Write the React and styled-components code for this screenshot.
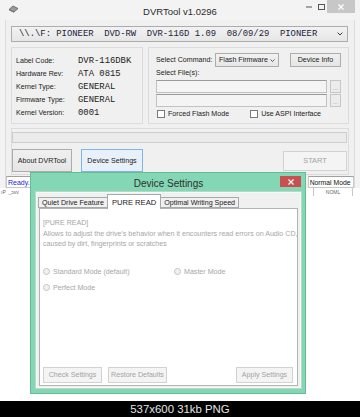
import React from 'react';
import styled, { createGlobalStyle } from 'styled-components';

const GlobalStyle = createGlobalStyle`
  html, body { margin: 0; padding: 0; background: #fff; }
  body { font-family: "Liberation Sans", Arial, sans-serif; font-size: 7.1px; color: #1a1a1a; }
  * { box-sizing: border-box; }
`;

const Screen = styled.div`
  width: 360px;
  height: 417px;
  display: flex;
  flex-direction: column;
  overflow: hidden;
`;

const Desktop = styled.div`
  position: relative;
  height: 401px;
  background: #fff;
`;

const Caption = styled.div`
  height: 16px;
  background: #000;
  color: #e4e4e4;
  font-size: 11.4px;
  display: flex;
  align-items: center;
  justify-content: center;
`;

/* ---------- main window ---------- */

const Window = styled.div`
  width: 360px;
  background: #f3f3f3;
  padding: 0 5px;
`;

const TitleBar = styled.div`
  height: 20px;
  display: grid;
  grid-template-columns: 1fr auto 1fr;
  align-items: center;
`;

const TitleText = styled.div`
  font-size: 9.5px;
  color: #2b2b2b;
  padding-top: 2px;
`;

const WinControls = styled.div`
  justify-self: end;
  align-self: start;
  display: flex;
  align-items: flex-start;
`;

const CtrlBtn = styled.div`
  width: ${p => p.$w}px;
  height: 13px;
  display: flex;
  align-items: center;
  justify-content: center;
  background: ${p => p.$bg || 'transparent'};
`;

const Client = styled.div`
  background: #f0f0f0;
  border-left: 1px solid #dcdcdc;
  border-right: 1px solid #dcdcdc;
`;

const ClientBody = styled.div`
  padding: 6px 5px 0 5px;
  display: flex;
  flex-direction: column;
`;

const DriveCombo = styled.div`
  height: 16px;
  margin-right: 1px;
  border: 1px solid #acacac;
  background: linear-gradient(#f2f2f2, #e6e6e6);
  display: flex;
  align-items: center;
  padding: 0 4px 0 7px;
  font-family: "Liberation Mono", "Courier New", monospace;
  font-size: 8.9px;
  color: #1c1c3a;
  white-space: pre;
`;

const Chevron = styled.span`
  margin-left: auto;
  display: flex;
`;

const GroupRow = styled.div`
  display: flex;
  gap: 5px;
  margin-top: 5px;
  height: 77px;
`;

const Group = styled.div`
  border: 1px solid #dcdcdc;
  width: ${p => (p.$w ? `${p.$w}px` : 'auto')};
  flex: ${p => (p.$w ? 'none' : '1')};
  margin-top: ${p => p.$mt || 0}px;
  padding: ${p => p.$pad};
  display: flex;
  flex-direction: column;
`;

const InfoRow = styled.div`
  height: 13.2px;
  display: flex;
  align-items: center;
`;

const InfoLabel = styled.span`
  width: 62px;
`;

const InfoValue = styled.span`
  font-family: "Liberation Mono", "Courier New", monospace;
  font-size: 8.9px;
  color: #222;
`;

const CmdRow = styled.div`
  display: flex;
  align-items: center;
  height: ${p => p.$h}px;
  margin-top: ${p => p.$mt || 0}px;
  white-space: nowrap;
`;

const SmallCombo = styled.div`
  width: 64px;
  height: 14px;
  margin-left: auto;
  border: 1px solid #acacac;
  background: linear-gradient(#f2f2f2, #e6e6e6);
  display: flex;
  align-items: center;
  padding: 0 3px;
`;

const Button = styled.div`
  width: ${p => p.$w}px;
  height: ${p => p.$h}px;
  display: flex;
  align-items: center;
  justify-content: center;
  border: 1px solid ${p => (p.$focus ? '#7eb4ea' : p.$disabled ? '#d2d2d2' : '#acacac')};
  background: ${p => (p.$focus ? '#e8f1fa' : p.$disabled ? '#f4f4f4' : 'linear-gradient(#f0f0f0, #e5e5e5)')};
  color: ${p => (p.$disabled ? '#a3a3a3' : '#1a1a1a')};
  font-size: ${p => p.$fs || 7.1}px;
  white-space: nowrap;
`;

const FileInput = styled.div`
  flex: 1;
  height: 13px;
  border: 1px solid #c2c2c2;
  border-top-color: #9a9a9a;
  background: #f4f4f4;
`;

const DotsBtn = styled.div`
  width: 11px;
  height: 13px;
  margin-left: 3px;
  border: 1px solid #c6c6c6;
  background: #ececec;
  color: #8a8a8a;
  font-size: 6px;
  display: flex;
  align-items: flex-end;
  justify-content: center;
  line-height: 7px;
`;

const Check = styled.span`
  width: 8px;
  height: 8px;
  border: 1px solid #7a7a7a;
  background: #fff;
  margin: 0 3px 0 ${p => p.$ml || 0}px;
`;

const Progress = styled.div`
  height: 11px;
  border: 1px solid #cdcdcd;
  background: #ebebeb;
`;

const ButtonRow = styled.div`
  margin-top: 6px;
  height: 23px;
  display: flex;
  align-items: center;
  gap: 9px;
`;

const StatusBar = styled.div`
  margin-top: 1px;
  height: 12px;
  display: flex;
  align-items: stretch;
`;

const StatusCell = styled.div`
  width: ${p => p.$w}px;
  margin-left: ${p => p.$ml || 0}px;
  border: 1px solid #c8c8c8;
  border-top-color: #a0a0a0;
  background: #fff;
  color: ${p => p.$color};
  display: flex;
  align-items: center;
  padding-left: 1px;
  font-size: ${p => p.$fs}px;
  white-space: nowrap;
`;

const GhostRow = styled.div`
  height: 8px;
  display: flex;
  align-items: center;
  color: #666;
  font-size: 5px;
`;

const GhostText = styled.span`
  margin-left: ${p => p.$ml}px;
  line-height: 6px;
`;

const GhostBox = styled.div`
  margin-left: auto;
  margin-right: 7px;
  width: 40px;
  height: 8px;
  border-left: 1px solid #c8c8c8;
  border-right: 1px solid #c8c8c8;
  display: flex;
  align-items: center;
  justify-content: center;
`;

/* ---------- device settings dialog ---------- */

const Dialog = styled.div`
  position: absolute;
  left: 30px;
  top: 172px;
  width: 276px;
  height: 222px;
  background: #83d7b4;
  border: 1px solid #62bd95;
  display: flex;
  flex-direction: column;
  padding: 0 4px 5px 5px;
`;

const DialogTitle = styled.div`
  height: 19px;
  display: grid;
  grid-template-columns: 1fr auto 1fr;
  align-items: center;
`;

const DialogTitleText = styled.div`
  grid-column: 2;
  font-size: 10px;
  color: #2f2f2f;
  padding-top: 2px;
`;

const CloseRed = styled.div`
  justify-self: end;
  align-self: start;
  margin-top: 3px;
  width: 21px;
  height: 11px;
  background: #c75050;
  display: flex;
  align-items: center;
  justify-content: center;
`;

const DialogBody = styled.div`
  flex: 1;
  background: #f0f0f0;
  border: 1px solid #f8f8f8;
  outline: 1px solid #b8d8c8;
  padding: 1px;
  display: flex;
  flex-direction: column;
`;

const Tabs = styled.div`
  display: flex;
  align-items: flex-end;
  height: 14px;
  position: relative;
  z-index: 1;
`;

const Tab = styled.div`
  height: ${p => (p.$active ? 15 : 11)}px;
  margin-bottom: ${p => (p.$active ? -1 : 0)}px;
  padding: 0 ${p => (p.$active ? 4 : 3)}px;
  background: ${p => (p.$active ? '#fff' : '#f0f0f0')};
  border: 1px solid #a9a9a9;
  border-bottom: ${p => (p.$active ? 'none' : '1px solid #a9a9a9')};
  margin-left: ${p => (p.$active ? -1 : 0)}px;
  margin-right: ${p => (p.$active ? -1 : 0)}px;
  display: flex;
  align-items: center;
  white-space: nowrap;
  font-size: ${p => (p.$active ? 7.6 : 7.1)}px;
  color: #1a1a1a;
`;

const TabPanel = styled.div`
  flex: 1;
  margin: 0 1px;
  background: #fff;
  border: 1px solid #b4b4b4;
  padding: 9px 4px 2px 3px;
  display: flex;
  flex-direction: column;
  color: #a6a6a6;
`;

const Para = styled.div`
  line-height: 10.5px;
  white-space: nowrap;
`;

const RadioRow = styled.div`
  display: flex;
  align-items: center;
  height: 10px;
  margin-top: ${p => p.$mt}px;
`;

const Radio = styled.span`
  width: 7px;
  height: 7px;
  border-radius: 50%;
  border: 1px solid #c3c3c3;
  background: #f1f1f1;
  margin-right: 3px;
`;

const RadioLabel = styled.span`
  width: ${p => (p.$w ? `${p.$w}px` : 'auto')};
`;

const DialogButtons = styled.div`
  margin-top: auto;
  display: flex;
  gap: 6px;
`;

const Drive = () => (
  <svg width="11" height="8" viewBox="0 0 11 8">
    <path d="M1 4.5 L5 1 L10 3.5 L6 7 Z" fill="#9a9a9a" stroke="#5a5a5a" strokeWidth="0.8" />
    <path d="M1 4.5 L6 7 L6 7.8 L1 5.3 Z" fill="#6d6d6d" />
  </svg>
);

const ChevronDown = ({ size = 6 }) => (
  <svg width={size} height={size * 0.6} viewBox="0 0 10 6">
    <path d="M1 1 L5 5 L9 1" fill="none" stroke="#333" strokeWidth="1.6" />
  </svg>
);

const Cross = ({ color }) => (
  <svg width="6" height="6" viewBox="0 0 6 6">
    <path d="M0.5 0.5 L5.5 5.5 M5.5 0.5 L0.5 5.5" stroke={color} strokeWidth="1.2" />
  </svg>
);

const info = [
  ['Label Code:', 'DVR-116DBK'],
  ['Hardware Rev:', 'ATA 0815'],
  ['Kernel Type:', 'GENERAL'],
  ['Firmware Type:', 'GENERAL'],
  ['Kernel Version:', '0001'],
];

export default function App() {
  return (
    <>
      <GlobalStyle />
      <Screen>
        <Desktop>
          <Window>
            <TitleBar>
              <div style={{ marginLeft: 3 }}><Drive /></div>
              <TitleText>DVRTool v1.0296</TitleText>
              <WinControls>
                <CtrlBtn $w={12}>
                  <svg width="6" height="2"><rect width="6" height="1" y="0.5" fill="#555" /></svg>
                </CtrlBtn>
                <CtrlBtn $w={12}>
                  <svg width="7" height="6"><rect x="0.5" y="0.5" width="6" height="5" fill="none" stroke="#555" /></svg>
                </CtrlBtn>
                <CtrlBtn $w={28} $bg="#c7c7c7"><Cross color="#fff" /></CtrlBtn>
              </WinControls>
            </TitleBar>
            <Client>
              <ClientBody>
                <DriveCombo>
                  {'\\\\.\\F: PIONEER  DVD-RW  DVR-116D 1.09  08/09/29  PIONEER'}
                  <Chevron><ChevronDown /></Chevron>
                </DriveCombo>
                <GroupRow>
                  <Group $w={132} $pad="6px 4px 0 4px">
                    {info.map(([l, v]) => (
                      <InfoRow key={l}>
                        <InfoLabel>{l}</InfoLabel>
                        <InfoValue>{v}</InfoValue>
                      </InfoRow>
                    ))}
                  </Group>
                  <Group $pad="5px 7px 0 7px">
                    <CmdRow $h={14}>
                      <span>Select Command:</span>
                      <SmallCombo>
                        Flash Firmware
                        <Chevron><ChevronDown size={5} /></Chevron>
                      </SmallCombo>
                      <Button $w={51} $h={14} style={{ marginLeft: 11 }}>Device Info</Button>
                    </CmdRow>
                    <CmdRow $h={12}>Select File(s):</CmdRow>
                    <CmdRow $h={13} $mt={1}>
                      <FileInput /><DotsBtn>...</DotsBtn>
                    </CmdRow>
                    <CmdRow $h={13} $mt={1}>
                      <FileInput /><DotsBtn>...</DotsBtn>
                    </CmdRow>
                    <CmdRow $h={11} $mt={1}>
                      <Check $ml={1} />
                      <span>Forced Flash Mode</span>
                      <Check $ml={21} />
                      <span>Use ASPI Interface</span>
                    </CmdRow>
                  </Group>
                </GroupRow>
                <Group $mt={4} $pad="3px 1px 2px 0">
                  <Progress />
                  <ButtonRow>
                    <Button $w={60} $h={23}>About DVRTool</Button>
                    <Button $w={62} $h={23} $focus>Device Settings</Button>
                    <Button $w={64} $h={20} $disabled $fs={7.4} style={{ marginLeft: 'auto' }}>START</Button>
                  </ButtonRow>
                </Group>
              </ClientBody>
              <StatusBar>
                <StatusCell $w={25} $color="#2424e0" $fs={7}>Ready.</StatusCell>
                <StatusCell $w={47} $ml={277} $color="#111" $fs={6.8}>Normal Mode</StatusCell>
              </StatusBar>
            </Client>
          </Window>
          <GhostRow>
            <GhostText $ml={1}>ıP&nbsp;&nbsp;_ɔvv</GhostText>
            <GhostBox><GhostText $ml={0}>NOML</GhostText></GhostBox>
          </GhostRow>

          <Dialog>
            <DialogTitle>
              <DialogTitleText>Device Settings</DialogTitleText>
              <CloseRed><Cross color="#fff" /></CloseRed>
            </DialogTitle>
            <DialogBody>
              <Tabs>
                <Tab>Quiet Drive Feature</Tab>
                <Tab $active>PURE READ</Tab>
                <Tab>Optimal Writing Speed</Tab>
              </Tabs>
              <TabPanel>
                <Para>[PURE READ]</Para>
                <Para>Allows to adjust the drive's behavior when it encounters read errors on Audio CD,</Para>
                <Para>caused by dirt, fingerprints or scratches</Para>
                <RadioRow $mt={17}>
                  <Radio />
                  <RadioLabel $w={121}>Standard Mode (default)</RadioLabel>
                  <Radio />
                  <RadioLabel>Master Mode</RadioLabel>
                </RadioRow>
                <RadioRow $mt={6}>
                  <Radio />
                  <RadioLabel>Perfect Mode</RadioLabel>
                </RadioRow>
                <DialogButtons>
                  <Button $w={59} $h={16} $disabled>Check Settings</Button>
                  <Button $w={59} $h={16} $disabled>Restore Defaults</Button>
                  <Button $w={57} $h={16} $disabled style={{ marginLeft: 'auto' }}>Apply Settings</Button>
                </DialogButtons>
              </TabPanel>
            </DialogBody>
          </Dialog>
        </Desktop>
        <Caption>537x600 31kb PNG</Caption>
      </Screen>
    </>
  );
}
